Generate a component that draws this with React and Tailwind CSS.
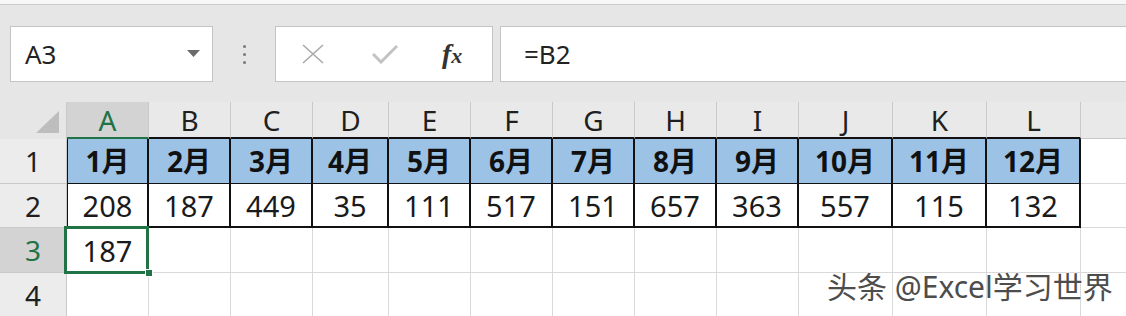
import React from 'react';

const cols = ['A', 'B', 'C', 'D', 'E', 'F', 'G', 'H', 'I', 'J', 'K', 'L'];
const months = ['1月', '2月', '3月', '4月', '5月', '6月', '7月', '8月', '9月', '10月', '11月', '12月'];
const values = [208, 187, 449, 35, 111, 517, 151, 657, 363, 557, 115, 132];

const font = { fontFamily: '"Noto Sans", "Noto Sans CJK SC", sans-serif' };

const App = () => {
  return (
    <div className="relative w-[1126px] h-[316px] overflow-hidden bg-[#e6e6e6] text-[#1f1f1f]" style={font}>
      {/* top strip */}
      <div className="h-[5px] bg-[#f7f7f7] border-b border-[#cdcdcd]" />

      {/* formula bar */}
      <div className="h-[97px] pt-[21px] flex items-start">
        <div className="ml-[10px] w-[203px] h-[56px] bg-white border border-[#c4c4c4] flex items-center justify-between pl-[14px] pr-[12px]">
          <span className="text-[26px] leading-none text-[#222]">A3</span>
          <svg width="13" height="8" viewBox="0 0 13 8">
            <polygon points="0,0 13,0 6.5,7" fill="#6a6a6a" />
          </svg>
        </div>
        <div className="w-[62px] h-[56px] flex flex-col items-center justify-center gap-[5px]">
          <span className="w-[3px] h-[3px] rounded-full bg-[#777]" />
          <span className="w-[3px] h-[3px] rounded-full bg-[#777]" />
          <span className="w-[3px] h-[3px] rounded-full bg-[#777]" />
        </div>
        <div className="w-[218px] h-[56px] bg-white border border-[#c4c4c4] flex items-center pl-[26px]">
          <svg width="22" height="20" viewBox="0 0 22 20">
            <path d="M1 1 L21 19 M21 1 L1 19" stroke="#a9a9a9" strokeWidth="1.6" fill="none" />
          </svg>
          <svg className="ml-[48px]" width="26" height="20" viewBox="0 0 26 20">
            <path d="M1 10 L9 18 L25 2" stroke="#c2c2c2" strokeWidth="3" fill="none" />
          </svg>
          <span
            className="ml-[44px] italic text-[#333] leading-none"
            style={{ fontFamily: '"Liberation Serif", serif' }}
          >
            <span className="text-[28px] font-bold">f</span>
            <span className="text-[22px] font-bold">x</span>
          </span>
        </div>
        <div className="ml-[7px] flex-1 h-[56px] bg-white border border-[#c4c4c4] border-r-0 flex items-center pl-[23px]">
          <span className="text-[26px] leading-none text-[#222]">=B2</span>
        </div>
      </div>

      {/* grid */}
      <div className="grid grid-cols-[67px_82px_82px_82px_76px_82px_82px_82px_82px_82px_94px_94px_94px_1fr] grid-rows-[37px_45px_44px_45px_45px]">
        {/* header row */}
        <div className="bg-[#e6e6e6] border-r border-[#c9c9c9] flex items-end justify-end pr-[7px] pb-[6px]">
          <svg width="23" height="22" viewBox="0 0 23 22">
            <polygon points="23,0 23,22 0,22" fill="#bdbdbd" />
          </svg>
        </div>
        {cols.map((c) =>
          c === 'A' ? (
            <div key={c} className="bg-[#d3d3d3] border-r border-[#c9c9c9] border-b-2 border-b-[#217346] flex items-center justify-center text-[28px] leading-none text-[#217346]">
              {c}
            </div>
          ) : (
            <div key={c} className="bg-[#e9e9e9] border-r border-[#c9c9c9] border-b-2 border-b-[#111] flex items-center justify-center text-[28px] leading-none">
              {c}
            </div>
          )
        )}
        <div className="bg-[#e9e9e9] border-b border-[#c9c9c9]" />

        {/* row 1 */}
        <div className="bg-[#ececec] border-r border-b border-[#c9c9c9] flex items-center justify-center text-[28px] leading-none">1</div>
        {months.map((m, i) => (
          <div
            key={m}
            className={`bg-[#9cc3e6] border-r-2 border-b border-[#111] flex items-center justify-center text-[28px] font-bold leading-none text-[#111] ${i === 0 ? 'border-l' : ''}`}
          >
            {m}
          </div>
        ))}
        <div className="bg-white border-b border-[#d9d9d9]" />

        {/* row 2 */}
        <div className="bg-[#ececec] border-r border-b border-[#c9c9c9] flex items-center justify-center text-[28px] leading-none">2</div>
        {values.map((v, i) => (
          <div
            key={i}
            className={`bg-white border-r-2 border-b-2 border-[#111] flex items-center justify-center text-[29px] leading-none text-[#1a1a1a] ${i === 0 ? 'border-l' : ''}`}
          >
            {v}
          </div>
        ))}
        <div className="bg-white border-b border-[#d9d9d9]" />

        {/* row 3 */}
        <div className="bg-[#d3d3d3] border-r border-b border-[#c9c9c9] flex items-center justify-center text-[28px] leading-none text-[#217346]">3</div>
        <div className="relative bg-white border-r border-b border-[#d9d9d9] flex items-center justify-center text-[29px] leading-none text-[#1a1a1a]">
          187
          <div className="absolute -left-[3px] -top-[2px] -right-[1px] -bottom-[2px] border-[3px] border-[#217346]" />
          <div className="absolute -right-[5px] -bottom-[5px] w-[8px] h-[8px] bg-[#217346] border border-white" />
        </div>
        {cols.slice(1).map((c) => (
          <div key={c} className="bg-white border-r border-b border-[#d9d9d9]" />
        ))}
        <div className="bg-white border-b border-[#d9d9d9]" />

        {/* row 4 */}
        <div className="bg-[#ececec] border-r border-b border-[#c9c9c9] flex items-center justify-center text-[28px] leading-none">4</div>
        {cols.map((c) => (
          <div key={c} className="bg-white border-r border-b border-[#d9d9d9]" />
        ))}
        <div className="bg-white border-b border-[#d9d9d9]" />
      </div>

      {/* watermark */}
      <div
        className="absolute left-[827px] top-[272px] text-[30px] leading-none text-[#4d4d4d] whitespace-nowrap"
        style={{ textShadow: '0 0 2px #fff, 0 0 2px #fff, 0 0 1px #fff' }}
      >
        头条 @Excel学习世界
      </div>
    </div>
  );
};

export default App;
